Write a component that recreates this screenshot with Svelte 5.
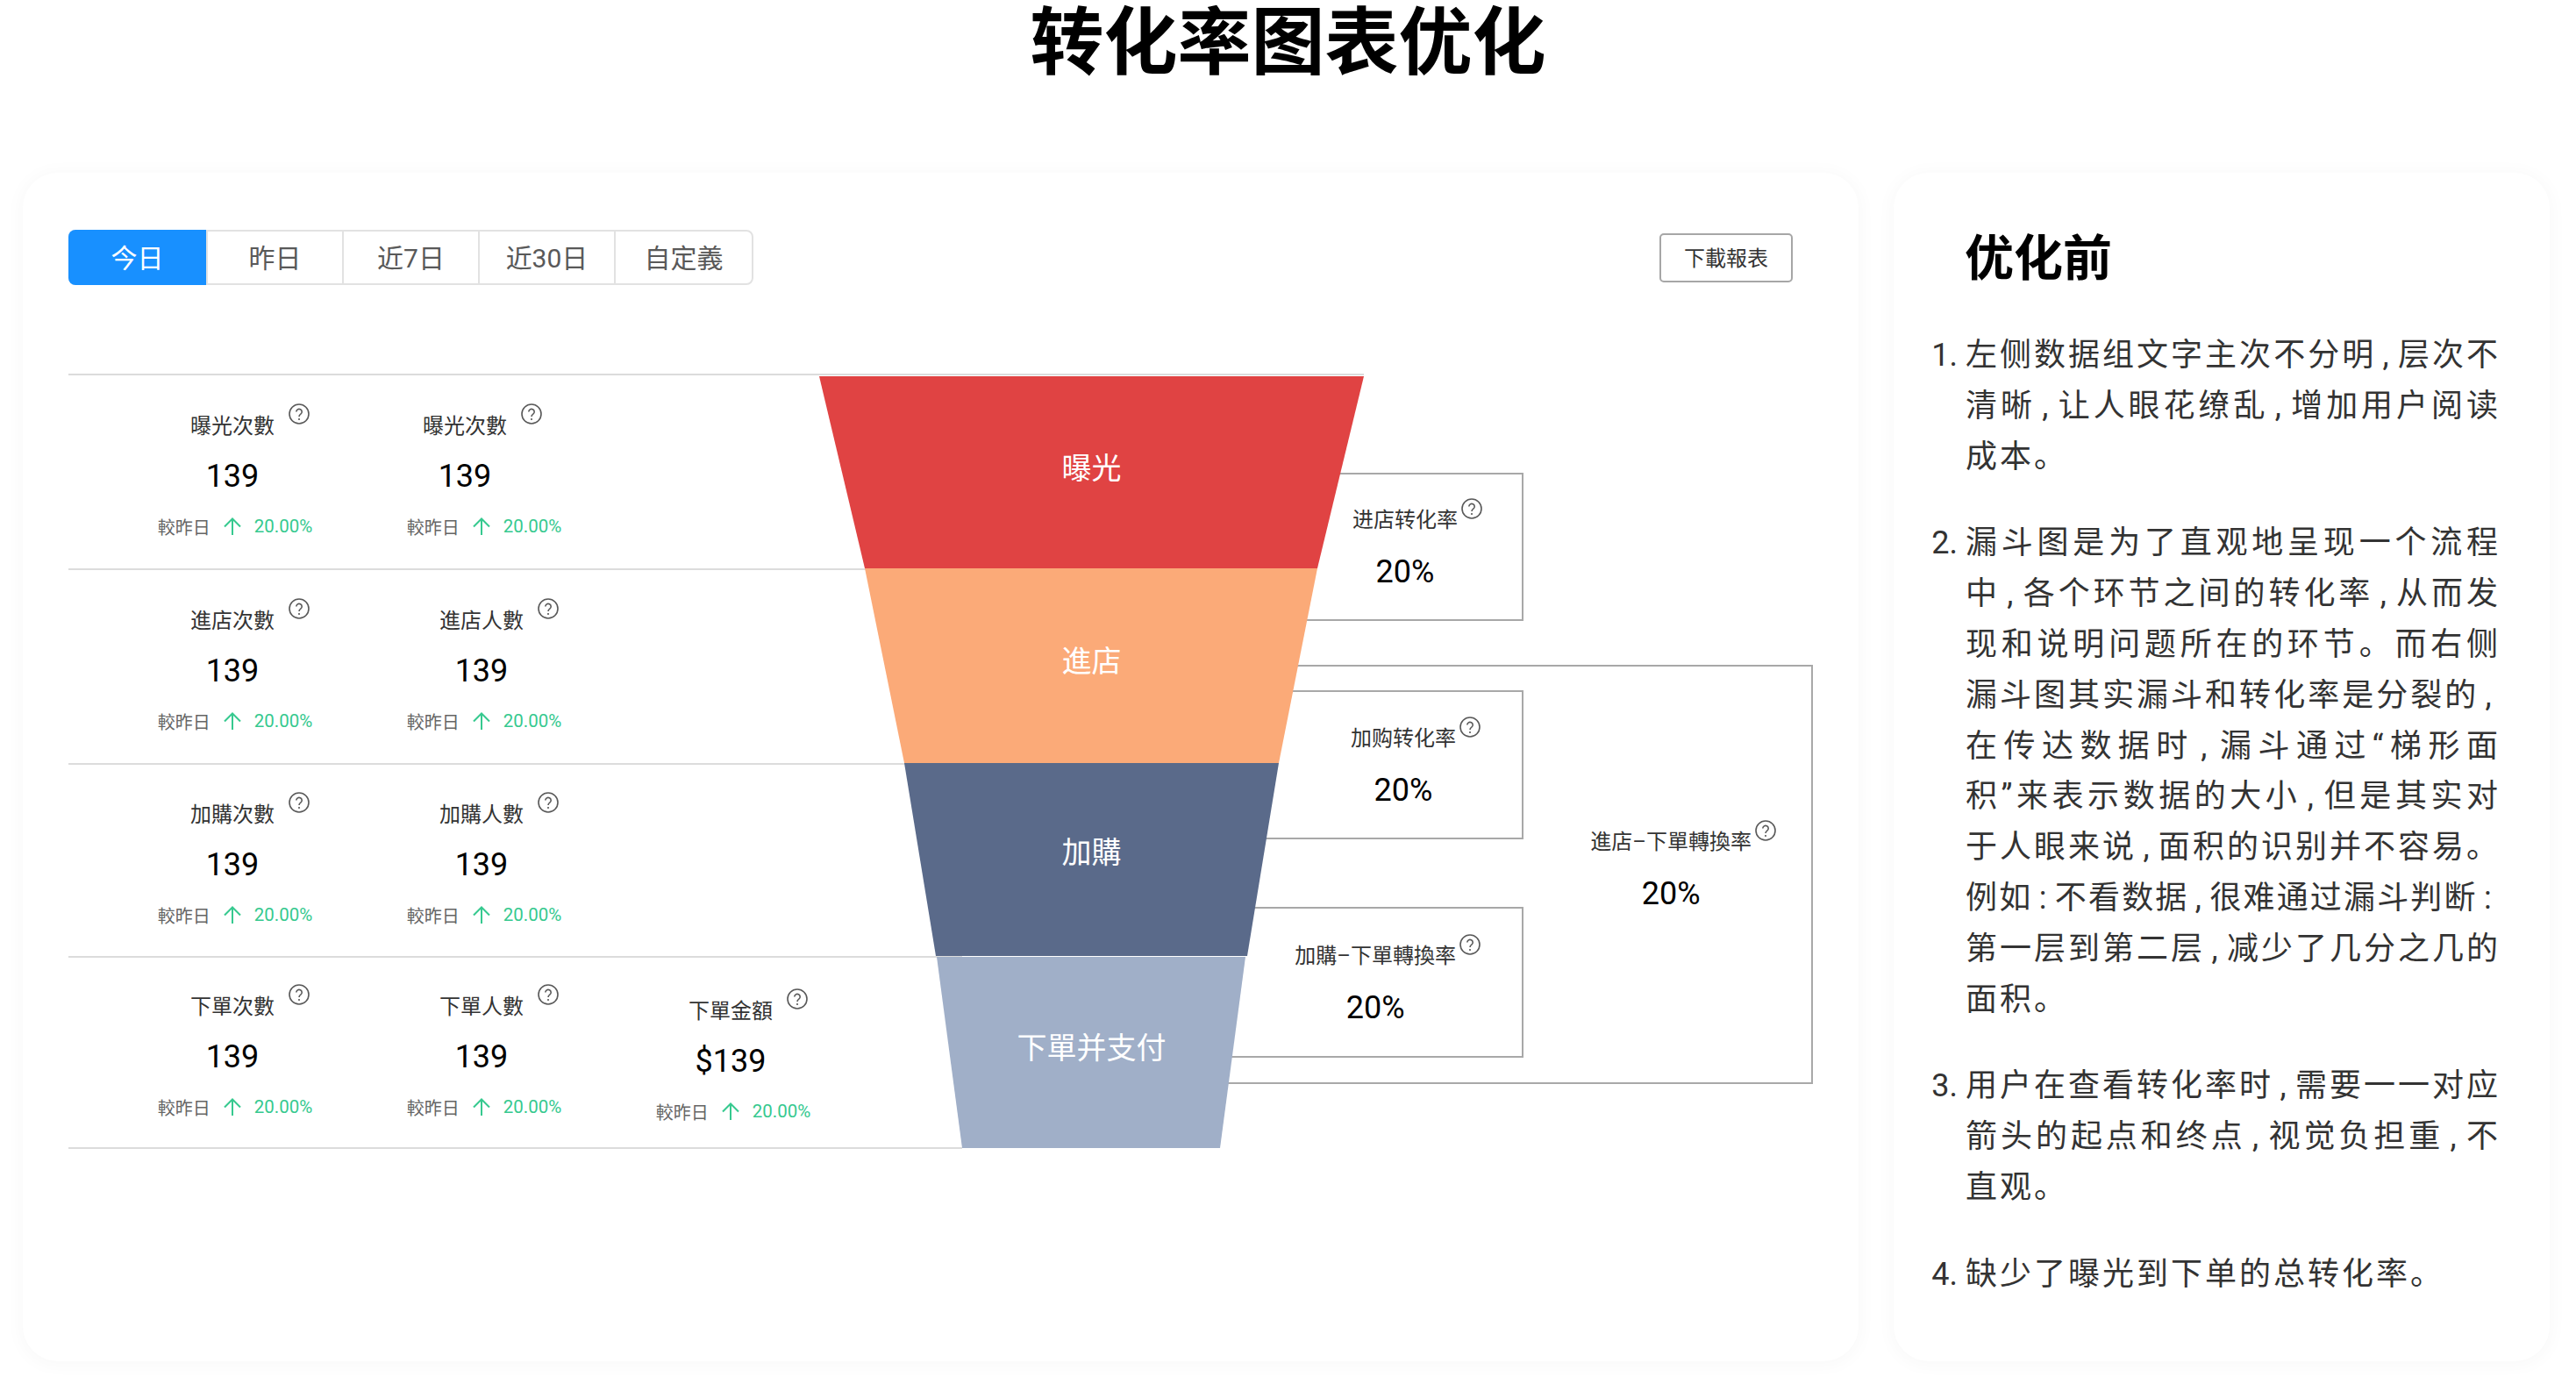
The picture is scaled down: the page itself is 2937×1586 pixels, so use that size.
<script>
  const rows = [
    [{ l: '曝光次數' }, { l: '曝光次數', shift: true }],
    [{ l: '進店次數' }, { l: '進店人數' }],
    [{ l: '加購次數' }, { l: '加購人數' }],
    [{ l: '下單次數' }, { l: '下單人數' }, { l: '下單金額', v: '$139', low: true }]
  ];
  const tabs = ['今日', '昨日', '近7日', '近30日', '自定義'];
  const segments = [
    { name: '曝光', color: '#e04343', points: '0,0 621,0 568,219 52,219', top: 3, h: 219, lift: 14 },
    { name: '進店', color: '#fbaa78', points: '52,0 568,0 524,222 97,222', top: 222, h: 222, lift: 16 },
    { name: '加購', color: '#5a6a8a', points: '97,0 524,0 488,220 133,220', top: 444, h: 220, lift: 22 },
    { name: '下單并支付', color: '#a0afc8', points: '134,0 486,0 457,218 163,218', top: 665, h: 218, lift: 16 }
  ];
  const boxes = [
    { cls: 'b1', l: '进店转化率' },
    { cls: 'b2', l: '加购转化率' },
    { cls: 'b3', l: '加購–下單轉換率' },
    { cls: 'b4', l: '進店–下單轉換率' }
  ];
  const t = '\u2009';
  const p = (s) => s.replaceAll(',', `${t},${t}`).replaceAll(':', `${t}:${t}`);
  const notes = [
    ['左侧数据组文字主次不分明,层次不', '清晰,让人眼花缭乱,增加用户阅读', '成本。'],
    ['漏斗图是为了直观地呈现一个流程', '中,各个环节之间的转化率,从而发', '现和说明问题所在的环节。而右侧', '漏斗图其实漏斗和转化率是分裂的,', '在传达数据时,漏斗通过“梯形面', '积”来表示数据的大小,但是其实对', '于人眼来说,面积的识别并不容易。', '例如:不看数据,很难通过漏斗判断:', '第一层到第二层,减少了几分之几的', '面积。'],
    ['用户在查看转化率时,需要一一对应', '箭头的起点和终点,视觉负担重,不', '直观。'],
    ['缺少了曝光到下单的总转化率。']
  ].map((lines) => lines.map(p));
</script>

{#snippet help()}
  <svg class="help" viewBox="0 0 24 24" aria-hidden="true">
    <circle cx="12" cy="12" r="11" fill="none" stroke="#595959" stroke-width="1.6" />
    <path d="M8.8 9.6a3.2 3.2 0 1 1 5 2.6c-1.1.8-1.8 1.3-1.8 2.8" fill="none" stroke="#595959" stroke-width="1.6" />
    <circle cx="12" cy="18" r="1.1" fill="#595959" />
  </svg>
{/snippet}

<div class="page">
  <h1>转化率图表优化</h1>
  <div class="cards">
    <section class="card main">
      <div class="toolbar">
        <div class="tabs">
          {#each tabs as tab, i}
            <div class="tab" class:on={i === 0}>{tab}</div>
          {/each}
        </div>
        <div class="dl">下載報表</div>
      </div>

      <div class="chart">
        <div class="rows">
          {#each rows as row}
            <div class="row">
              {#each row as s}
                <div class="stat" class:low={s.low}>
                  <div class="head" class:shift={s.shift}>
                    <span class="label">{s.l}{@render help()}</span>
                  </div>
                  <div class="value" class:shift={s.shift}>{s.v ?? '139'}</div>
                  <div class="cmp">
                    <span class="cmp-l">較昨日</span>
                    <svg class="up" viewBox="0 0 20 20" aria-hidden="true">
                      <path d="M10 20V1.5M1 10.5l9-9 9 9" fill="none" stroke="#36c98f" stroke-width="2" />
                    </svg>
                    <span class="pct">20.00%</span>
                  </div>
                </div>
              {/each}
            </div>
          {/each}
        </div>

        {#each boxes as b}
          <div class="box {b.cls}">
            <div class="box-in">
              <div class="box-l"><span class="label">{b.l}{@render help()}</span></div>
              <div class="value">20%</div>
            </div>
          </div>
        {/each}

        {#each segments as s}
          <div class="seg" style="top:{s.top}px;height:{s.h}px">
            <svg viewBox="0 0 621 {s.h}" width="621" height={s.h} aria-hidden="true">
              <polygon points={s.points} fill={s.color} />
            </svg>
            <span style="margin-bottom:{s.lift}px">{s.name}</span>
          </div>
        {/each}
      </div>
    </section>

    <aside class="card side">
      <h2>优化前</h2>
      <ol>
        {#each notes as lines}
          <li>
            {#each lines as line, i}
              <span class="line" class:last={i === lines.length - 1}>{line}</span>
            {/each}
          </li>
        {/each}
      </ol>
    </aside>
  </div>
</div>

<style>
  :global(body) {
    margin: 0;
    background: #fff;
  }
  .page {
    width: 2937px;
    height: 1586px;
    overflow: hidden;
    font-family: Roboto, "Noto Sans CJK SC", sans-serif;
    color: #333;
  }
  h1 {
    margin: 0;
    height: 197px;
    padding-top: 3px;
    box-sizing: border-box;
    text-align: center;
    font-size: 84px;
    line-height: 94px;
    font-weight: 700;
    color: #000;
  }
  .cards {
    display: flex;
    gap: 40px;
    padding: 0 30px 0 26px;
    height: 1355px;
  }
  .card {
    background: #fff;
    border-radius: 40px;
    box-shadow: 0 2px 18px 5px rgba(0, 0, 0, 0.022);
    box-sizing: border-box;
  }
  .main {
    width: 2093px;
    flex: none;
    padding: 65px 0 0 52px;
  }
  .side {
    flex: 1;
    padding: 58px 34px 0 41px;
  }
  .toolbar {
    display: flex;
    align-items: center;
    justify-content: space-between;
    height: 63px;
    padding-right: 75px;
  }
  .tabs {
    display: flex;
    height: 63px;
    box-sizing: border-box;
    border: 2px solid #e2e2e2;
    border-radius: 8px;
  }
  .tab {
    width: 155px;
    margin: -2px 0;
    padding-bottom: 4px;
    display: flex;
    align-items: center;
    justify-content: center;
    font-size: 30px;
    color: #595959;
    border-left: 2px solid #e2e2e2;
    box-sizing: border-box;
  }
  .tab:first-child {
    border-left: 0;
  }
  .tab:last-child {
    width: 157px;
  }
  .tab.on {
    width: 157px;
    margin-left: -2px;
    background: #1890ff;
    color: #fff;
    border-radius: 8px 0 0 8px;
  }
  .dl {
    width: 152px;
    height: 56px;
    padding-bottom: 2px;
    box-sizing: border-box;
    border: 2px solid #a6a6a6;
    border-radius: 5px;
    display: flex;
    align-items: center;
    justify-content: center;
    font-size: 24px;
  }
  .chart {
    position: relative;
    margin-top: 101px;
    height: 884px;
  }
  .rows {
    width: 1477px;
  }
  .row {
    width: 974px;
    height: 220px;
    border-top: 2px solid #dcdcdc;
    display: flex;
    padding-left: 45px;
  }
  .row:first-child {
    width: 1432px;
  }
  .row:nth-child(3) {
    height: 218px;
  }
  .row:last-child {
    height: 216px;
    border-bottom: 2px solid #dcdcdc;
  }
  .stat {
    width: 284px;
    padding-top: 40px;
    text-align: center;
    flex: none;
  }
  .row:nth-child(3) .stat {
    padding-top: 39px;
  }
  .row:nth-child(4) .stat {
    padding-top: 38px;
  }
  .row:nth-child(4) .stat.low {
    padding-top: 43px;
  }
  .head {
    height: 36px;
    line-height: 36px;
    font-size: 24px;
  }
  .shift {
    margin-right: 38px;
  }
  .label {
    position: relative;
    display: inline-block;
  }
  .help {
    position: absolute;
    left: calc(100% + 16px);
    top: -8px;
    width: 24px;
    height: 24px;
  }
  .value {
    margin-top: 14px;
    height: 50px;
    line-height: 50px;
    font-size: 36px;
    color: #000;
  }
  .cmp {
    margin-top: 18px;
    height: 28px;
    display: flex;
    align-items: center;
    justify-content: center;
    gap: 15px;
    font-size: 20px;
    color: #666;
    padding-left: 6px;
  }
  .pct {
    color: #36c98f;
    font-size: 20.5px;
  }
  .up {
    width: 20px;
    height: 20px;
  }
  .seg {
    position: absolute;
    left: 856px;
    width: 621px;
    display: flex;
    align-items: center;
    justify-content: center;
  }
  .seg svg {
    position: absolute;
    left: 0;
    top: 0;
  }
  .seg span {
    position: relative;
    color: #fff;
    font-size: 34px;
  }
  .box {
    position: absolute;
    box-sizing: border-box;
    border: 2px solid #a8a8a8;
    border-left: 0;
    display: flex;
    justify-content: flex-end;
    text-align: center;
  }
  .box-l {
    font-size: 24px;
    line-height: 36px;
  }
  .box .help {
    left: calc(100% + 4px);
    top: -7px;
  }
  .box .value {
    margin-top: 16px;
  }
  .b1 {
    left: 1380px;
    width: 279px;
    top: 113px;
    height: 169px;
    padding: 34px 73px 0 0;
  }
  .b2 {
    left: 1350px;
    width: 309px;
    top: 361px;
    height: 170px;
    padding: 35px 75px 0 0;
  }
  .b3 {
    left: 1300px;
    width: 359px;
    top: 608px;
    height: 172px;
    padding: 36px 75px 0 0;
  }
  .b4 {
    left: 1300px;
    width: 689px;
    top: 332px;
    height: 478px;
    padding: 182px 68px 0 0;
  }
  h2 {
    margin: 0 0 0 40px;
    height: 80px;
    line-height: 80px;
    font-size: 56px;
    font-weight: 700;
    color: #000;
  }
  ol {
    margin: 42px 0 0;
    padding: 0 0 0 41px;
    font-size: 36px;
    line-height: 57.8px;
    color: #333;
  }
  li {
    margin-bottom: 41px;
  }
  .line {
    display: block;
    width: 607px;
    text-align: justify;
    text-align-last: justify;
  }
  .line.last {
    text-align-last: left;
    letter-spacing: 3px;
  }
</style>
